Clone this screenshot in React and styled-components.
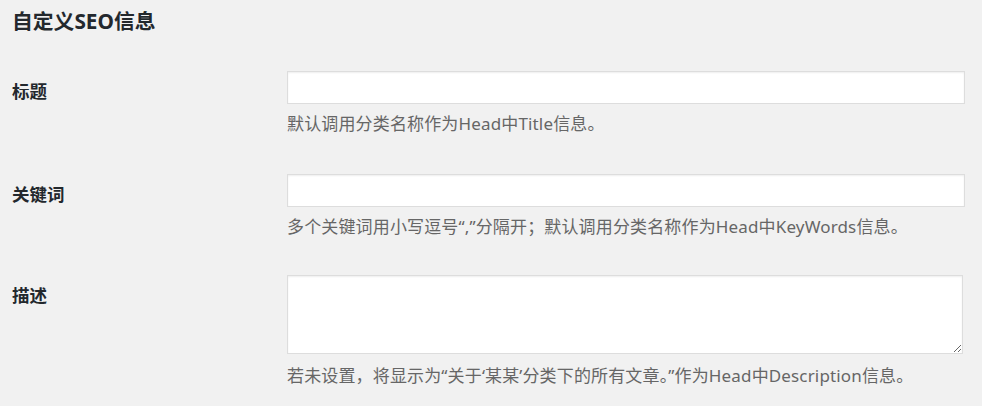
import React from 'react'
import styled, { createGlobalStyle } from 'styled-components'

const GlobalStyle = createGlobalStyle`
  html, body {
    margin: 0;
    background: #f1f1f1;
  }
  body {
    font-family: "Noto Sans", "Noto Sans CJK SC", sans-serif;
    color: #23282d;
  }
`

const Wrap = styled.div`
  padding: 0 17px 0 12px;
`

const Title = styled.h2`
  margin: 0;
  padding-top: 7px;
  font-size: 20.8px;
  line-height: 28px;
  font-weight: 700;
  color: #23282d;
`

const Table = styled.div`
  padding-top: 17px;
`

const Row = styled.div`
  display: grid;
  grid-template-columns: 275px 1fr;
  padding: ${p => p.$top}px 0 19px;
`

const Label = styled.label`
  padding-top: 8px;
  font-size: 17.5px;
  line-height: 24px;
  font-weight: 700;
  color: #23282d;
`

const Field = styled.div`
  display: flex;
  flex-direction: column;
`

const TextInput = styled.input`
  box-sizing: border-box;
  width: 100%;
  height: 33px;
  margin: 0;
  border: 1px solid #ddd;
  box-shadow: inset 0 1px 2px rgba(0, 0, 0, 0.07);
  background: #fff;
  outline: none;
  font-size: 16px;
`

const TextArea = styled.textarea`
  box-sizing: border-box;
  width: calc(100% - 2px);
  height: 79px;
  margin: 0;
  border: 1px solid #ddd;
  box-shadow: inset 0 1px 2px rgba(0, 0, 0, 0.07);
  background: #fff;
  outline: none;
  resize: vertical;
  display: block;
`

const Desc = styled.p`
  margin: ${p => p.$gap}px 0 0;
  font-size: 17px;
  letter-spacing: 0.15px;
  line-height: 24px;
  color: #666;
  white-space: nowrap;
`

const rows = [
  { label: '标题', top: 19, desc: '默认调用分类名称作为Head中Title信息。' },
  { label: '关键词', top: 19, desc: '多个关键词用小写逗号“,”分隔开；默认调用分类名称作为Head中KeyWords信息。' },
  { label: '描述', top: 17, area: true, desc: '若未设置，将显示为“关于‘某某’分类下的所有文章。”作为Head中Description信息。' },
]

function App() {
  return (
    <Wrap>
      <GlobalStyle />
      <Title>自定义SEO信息</Title>
      <Table>
        {rows.map((r, idx) => (
          <Row key={idx} $top={r.top}>
            <Label>{r.label}</Label>
            <Field>
              {r.area ? <TextArea /> : <TextInput type="text" />}
              <Desc $gap={r.area ? 10 : 8}>{r.desc}</Desc>
            </Field>
          </Row>
        ))}
      </Table>
    </Wrap>
  )
}

export default App
